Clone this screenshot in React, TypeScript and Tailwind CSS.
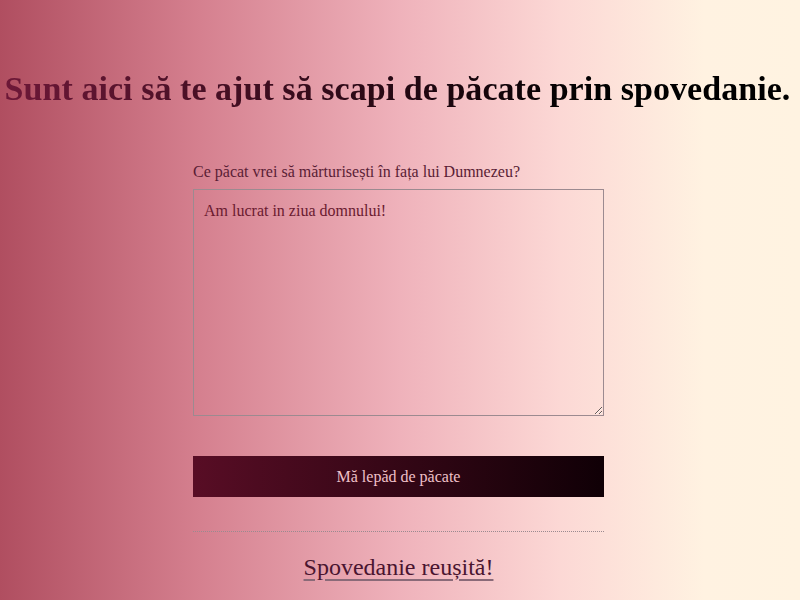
import React from "react";

export default function App() {
  const serif = { fontFamily: '"Liberation Serif", "DejaVu Serif", serif' };
  return (
    <div
      className="w-full h-[600px] overflow-hidden bg-[linear-gradient(to_right,#b04e60_0%,#d5808f_25%,#efb2bb_50%,#fcd8d5_70%,#fff2e1_88%,#fff3e1_100%)]"
      style={serif}
    >
      <h1 className="pt-[65px] pr-[5px] text-center text-[34px] leading-[48px] font-bold bg-[linear-gradient(to_right,#6e1838,#000000_75%)] bg-clip-text text-transparent tracking-[0.05px]">
        Sunt aici să te ajut să scapi de păcate prin spovedanie.
      </h1>
      <div className="flex justify-center pr-[3px] mt-[49px]">
        <div className="w-[411px] flex flex-col">
          <label className="text-[16px] leading-[20px] text-[#5a1d35]">
            Ce păcat vrei să mărturisești în fața lui Dumnezeu?
          </label>
          <textarea
            className="mt-[7px] h-[227px] w-full resize-y border border-[#9c8a90] bg-transparent px-[10px] py-[10px] text-[16px] leading-[22px] text-[#6a1a30] outline-none"
            style={serif}
            defaultValue="Am lucrat in ziua domnului!"
          />
          <button
            className="mt-[40px] h-[41px] w-full bg-[linear-gradient(to_right,#580d25,#100006)] text-[16px] text-[#efc0c8]"
            style={serif}
          >
            Mă lepăd de păcate
          </button>
          <div className="mt-[34px] border-t border-dotted border-[#9a8a90]" />
          <div className="mt-[20px] text-center">
            <span className="text-[24px] leading-[30px] text-[#4a1530] underline decoration-[#8a6a78] underline-offset-[4px]">
              Spovedanie reușită!
            </span>
          </div>
        </div>
      </div>
    </div>
  );
}
